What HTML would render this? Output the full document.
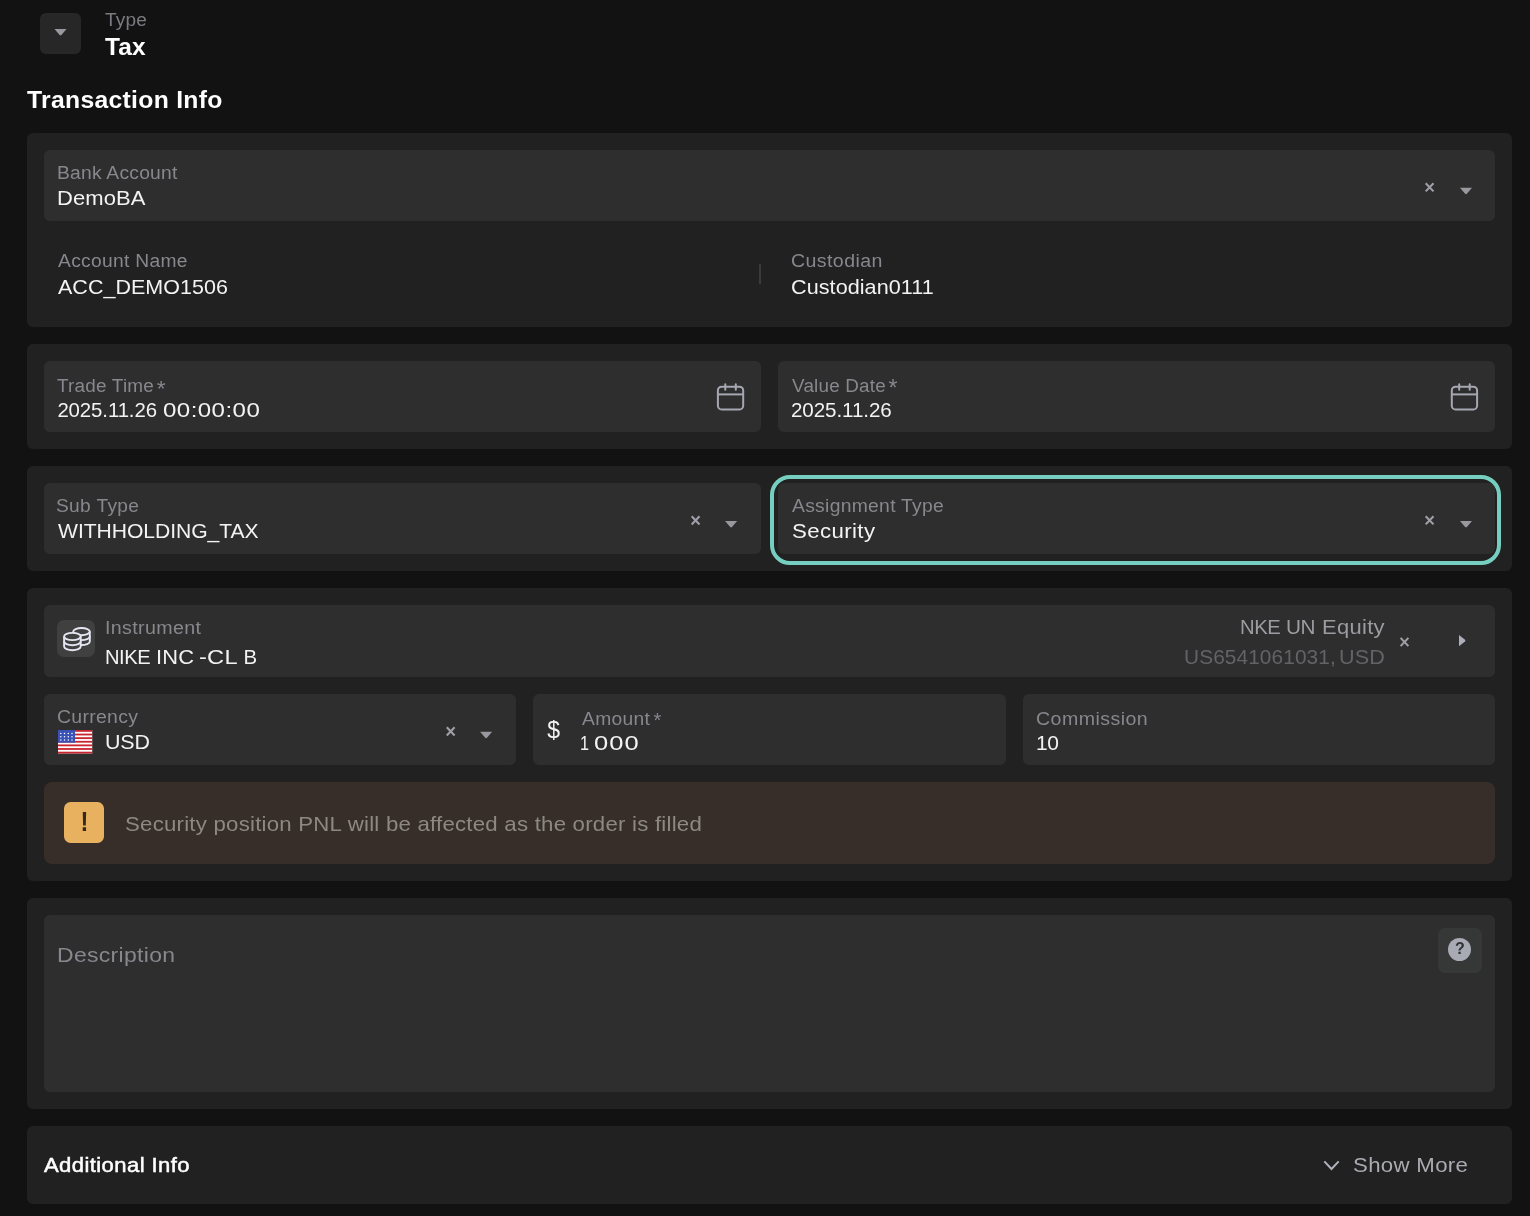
<!DOCTYPE html>
<html lang="en">
<head>
<meta charset="utf-8">
<title>Transaction Info</title>
<style>
html,body{margin:0;padding:0;}
body{width:1530px;height:1216px;background:#121212;overflow:hidden;position:relative;font-family:"Liberation Sans",sans-serif;-webkit-font-smoothing:antialiased;}
.b{position:absolute;}
.t{position:absolute;white-space:nowrap;line-height:1;margin:0;padding:0;transform-origin:0 0;}
svg{position:absolute;left:0;top:0;}
#txt{position:absolute;left:0;top:0;width:1530px;height:1216px;will-change:transform;}
</style>
</head>
<body>

<div class="b" style="left:40px;top:13px;width:41px;height:41px;background:#272727;border-radius:6px;"></div>
<div class="b" style="left:27px;top:133px;width:1485px;height:194px;background:#212121;border-radius:6px;"></div>
<div class="b" style="left:27px;top:344px;width:1485px;height:105px;background:#212121;border-radius:6px;"></div>
<div class="b" style="left:27px;top:466px;width:1485px;height:105px;background:#212121;border-radius:6px;"></div>
<div class="b" style="left:27px;top:588px;width:1485px;height:293px;background:#212121;border-radius:6px;"></div>
<div class="b" style="left:27px;top:898px;width:1485px;height:211px;background:#212121;border-radius:6px;"></div>
<div class="b" style="left:27px;top:1126px;width:1485px;height:78px;background:#212121;border-radius:6px;"></div>
<div class="b" style="left:44px;top:150px;width:1451px;height:71px;background:#2e2e2e;border-radius:6px;"></div>
<div class="b" style="left:759.4px;top:264.3px;width:1.3px;height:19.3px;background:#3b3b3b;border-radius:0px;"></div>
<div class="b" style="left:44px;top:361px;width:717px;height:71px;background:#2e2e2e;border-radius:6px;"></div>
<div class="b" style="left:778px;top:361px;width:717px;height:71px;background:#2e2e2e;border-radius:6px;"></div>
<div class="b" style="left:44px;top:483px;width:717px;height:71px;background:#2e2e2e;border-radius:6px;"></div>
<div class="b" style="left:778px;top:483px;width:717px;height:71px;background:#2e2e2e;border-radius:6px;"></div>
<div class="b" style="left:770px;top:475px;width:723px;height:82px;border:4px solid #75cebf;border-radius:20px;"></div>
<div class="b" style="left:44px;top:605px;width:1451px;height:72px;background:#2e2e2e;border-radius:6px;"></div>
<div class="b" style="left:57px;top:620px;width:38px;height:37px;background:#404040;border-radius:7px;"></div>
<div class="b" style="left:44px;top:694px;width:472px;height:71px;background:#2e2e2e;border-radius:6px;"></div>
<div class="b" style="left:533px;top:694px;width:473px;height:71px;background:#2e2e2e;border-radius:6px;"></div>
<div class="b" style="left:1023px;top:694px;width:472px;height:71px;background:#2e2e2e;border-radius:6px;"></div>
<div class="b" style="left:44px;top:782px;width:1451px;height:82px;background:#372e29;border-radius:8px;"></div>
<div class="b" style="left:64px;top:802px;width:40px;height:41px;background:#e7b160;border-radius:6.5px;"></div>
<div class="b" style="left:44px;top:915px;width:1451px;height:177px;background:#2e2e2e;border-radius:6px;"></div>
<div class="b" style="left:1438px;top:928px;width:44px;height:45px;background:#363838;border-radius:7px;"></div>
<div class="b" style="left:1448px;top:938px;width:23.2px;height:23.2px;background:#a8abb4;border-radius:12px;"></div>
<div id="txt">
<span class="t" id="type" style="left:104.87px;top:11.00px;font-size:18px;font-weight:400;color:#7a7a81;letter-spacing:0.190px;transform:scaleX(1.0582);">Type</span>
<span class="t" id="tax" style="left:105.20px;top:36.00px;font-size:23.5px;font-weight:700;color:#ffffff;letter-spacing:0.102px;transform:scaleX(1.0407);">Tax</span>
<span class="t" id="tinfo" style="left:27.10px;top:89.00px;font-size:23.5px;font-weight:700;color:#ffffff;letter-spacing:0.285px;transform:scaleX(1.0518);">Transaction Info</span>
<span class="t" id="bal" style="left:56.90px;top:164.00px;font-size:18px;font-weight:400;color:#87878d;letter-spacing:0.212px;transform:scaleX(1.0706);">Bank Account</span>
<span class="t" id="bav" style="left:57.16px;top:188.00px;font-size:20.4px;font-weight:400;color:#f3f3f3;letter-spacing:0.065px;transform:scaleX(1.0791);">DemoBA</span>
<span class="t" id="anl" style="left:57.76px;top:252.00px;font-size:18px;font-weight:400;color:#87878d;letter-spacing:0.283px;transform:scaleX(1.0686);">Account Name</span>
<span class="t" id="anv" style="left:57.87px;top:277.00px;font-size:20.4px;font-weight:400;color:#f3f3f3;letter-spacing:0.031px;transform:scaleX(1.0533);">ACC_DEMO1506</span>
<span class="t" id="cul" style="left:791.08px;top:252.00px;font-size:18px;font-weight:400;color:#87878d;letter-spacing:0.371px;transform:scaleX(1.0871);">Custodian</span>
<span class="t" id="cuv" style="left:790.65px;top:277.00px;font-size:20.4px;font-weight:400;color:#f3f3f3;letter-spacing:0.054px;transform:scaleX(1.0590);">Custodian0111</span>
<span class="t" id="ttl" style="left:56.96px;top:377.00px;font-size:18px;font-weight:400;color:#87878d;letter-spacing:0.184px;transform:scaleX(1.0524);">Trade Time</span>
<span class="t" id="ast1" style="left:156.63px;top:377.59px;font-size:22.55px;color:#87878d;">*</span>
<span class="t" id="ttv" style="left:57.38px;top:400.00px;font-size:20.4px;font-weight:400;color:#f3f3f3;letter-spacing:-0.099px;">2025.11.26</span>
<span class="t" id="ttv2" style="left:163.24px;top:400.00px;font-size:20.4px;font-weight:400;color:#f3f3f3;letter-spacing:0.375px;transform:scaleX(1.1800);">00:00:00</span>
<span class="t" id="vdl" style="left:792.04px;top:377.00px;font-size:18px;font-weight:400;color:#87878d;letter-spacing:0.199px;transform:scaleX(1.0471);">Value Date</span>
<span class="t" id="ast2" style="left:888.43px;top:377.38px;font-size:23.03px;color:#87878d;">*</span>
<span class="t" id="vdv" style="left:790.98px;top:400.00px;font-size:20.4px;font-weight:400;color:#f3f3f3;letter-spacing:-0.105px;transform:scaleX(1.0112);">2025.11.26</span>
<span class="t" id="stl" style="left:56.34px;top:497.00px;font-size:18px;font-weight:400;color:#87878d;letter-spacing:0.329px;transform:scaleX(1.0636);">Sub Type</span>
<span class="t" id="stv" style="left:57.91px;top:521.00px;font-size:20.4px;font-weight:400;color:#f3f3f3;letter-spacing:-0.058px;transform:scaleX(1.0364);">WITHHOLDING_TAX</span>
<span class="t" id="atl" style="left:792.25px;top:497.00px;font-size:18px;font-weight:400;color:#87878d;letter-spacing:0.267px;transform:scaleX(1.0731);">Assignment Type</span>
<span class="t" id="atv" style="left:791.70px;top:521.00px;font-size:20.4px;font-weight:400;color:#f3f3f3;letter-spacing:0.361px;transform:scaleX(1.0900);">Security</span>
<span class="t" id="inl" style="left:104.52px;top:619.00px;font-size:18px;font-weight:400;color:#87878d;letter-spacing:0.331px;transform:scaleX(1.0900);">Instrument</span>
<span class="t" id="inv" style="left:105.03px;top:647.00px;font-size:20.4px;font-weight:400;color:#f3f3f3;letter-spacing:-0.435px;transform:scaleX(0.9872);">NIKE </span>
<span class="t" id="inv2" style="left:156.48px;top:647.00px;font-size:20.4px;font-weight:400;color:#f3f3f3;letter-spacing:0.140px;transform:scaleX(1.0722);">INC </span>
<span class="t" id="inv3" style="left:199.40px;top:647.00px;font-size:20.4px;font-weight:400;color:#f3f3f3;letter-spacing:0.194px;transform:scaleX(1.1600);">-CL </span>
<span class="t" id="inv4" style="left:243.52px;top:647.00px;font-size:20.4px;font-weight:400;color:#f3f3f3;letter-spacing:0.000px;">B</span>
<span class="t" id="nke" style="left:1239.60px;top:617.00px;font-size:20.4px;font-weight:400;color:#9c9ca1;letter-spacing:-0.431px;transform:scaleX(0.9933);">NKE </span>
<span class="t" id="nke2" style="left:1286.22px;top:617.00px;font-size:20.4px;font-weight:400;color:#9c9ca1;letter-spacing:-0.490px;transform:scaleX(1.0180);">UN </span>
<span class="t" id="nke3" style="left:1321.91px;top:617.00px;font-size:20.4px;font-weight:400;color:#9c9ca1;letter-spacing:0.290px;transform:scaleX(1.0758);">Equity</span>
<span class="t" id="isin" style="left:1183.74px;top:647.00px;font-size:20.4px;font-weight:400;color:#636367;letter-spacing:0.107px;transform:scaleX(1.0206);">US6541061031, </span>
<span class="t" id="isin2" style="left:1339.36px;top:647.00px;font-size:20.4px;font-weight:400;color:#636367;letter-spacing:0.084px;transform:scaleX(1.0598);">USD</span>
<span class="t" id="crl" style="left:56.82px;top:708.00px;font-size:18px;font-weight:400;color:#87878d;letter-spacing:0.262px;transform:scaleX(1.0803);">Currency</span>
<span class="t" id="crv" style="left:104.59px;top:732.00px;font-size:20.4px;font-weight:400;color:#f3f3f3;letter-spacing:-0.171px;transform:scaleX(1.0509);">USD</span>
<span class="t" id="dol" style="left:547.26px;top:719.00px;font-size:23px;font-weight:400;color:#f3f3f3;letter-spacing:0.000px;">$</span>
<span class="t" id="aml" style="left:581.80px;top:710.00px;font-size:18px;font-weight:400;color:#87878d;letter-spacing:0.293px;transform:scaleX(1.0698);">Amount</span>
<span class="t" id="ast3" style="left:653.51px;top:710.05px;font-size:20.01px;color:#87878d;">*</span>
<span class="t" id="amv" style="left:579.58px;top:733.00px;font-size:20.4px;font-weight:400;color:#f3f3f3;letter-spacing:0.000px;transform:scaleX(0.8000);">1 </span>
<span class="t" id="amv2" style="left:594.02px;top:733.00px;font-size:20.4px;font-weight:400;color:#f3f3f3;letter-spacing:0.824px;transform:scaleX(1.2500);">000</span>
<span class="t" id="col" style="left:1035.68px;top:710.00px;font-size:18px;font-weight:400;color:#87878d;letter-spacing:0.408px;transform:scaleX(1.0872);">Commission</span>
<span class="t" id="cov" style="left:1035.53px;top:733.00px;font-size:20.4px;font-weight:400;color:#f3f3f3;letter-spacing:-0.455px;transform:scaleX(1.0277);">10</span>
<span class="t" id="bang" style="left:79.4px;top:809px;width:11px;text-align:center;font-size:27px;font-weight:700;color:#33291f;transform:scaleX(0.88);transform-origin:50% 50%;">!</span>
<span class="t" id="warn" style="left:124.66px;top:814.00px;font-size:20.4px;font-weight:400;color:#8d8883;letter-spacing:0.205px;transform:scaleX(1.0900);">Security position PNL will be affected as the order is filled</span>
<span class="t" id="desc" style="left:56.99px;top:945.00px;font-size:20.4px;font-weight:400;color:#87878d;letter-spacing:0.300px;transform:scaleX(1.1248);">Description</span>
<span class="t" id="q" style="left:1449px;top:941px;width:22px;text-align:center;font-size:16px;font-weight:700;color:#303135;">?</span>
<span class="t" id="addi" style="left:44.20px;top:1155.00px;font-size:20.4px;font-weight:400;color:#ffffff;letter-spacing:0.378px;transform:scaleX(1.0816);-webkit-text-stroke:0.5px #ffffff;">Additional Info</span>
<span class="t" id="more" style="left:1352.59px;top:1155.00px;font-size:20.4px;font-weight:400;color:#aaaab3;letter-spacing:0.289px;transform:scaleX(1.0900);">Show More</span>
</div>
<svg width="1530" height="1216" viewBox="0 0 1530 1216">
<path d="M54.5 29 H66.5 L61.4 35 Q60.5 35.9 59.6 35 Z" fill="#98989f"/>
<path d="M1425.6999999999998 183.20000000000002 L1433.5 191.4 M1433.5 183.20000000000002 L1425.6999999999998 191.4" stroke="#9f9fa7" stroke-width="2.1" fill="none"/>
<path d="M1460 187.8 H1472 L1466.9 193.8 Q1466 194.70000000000002 1465.1 193.8 Z" fill="#98989f"/>
<path d="M691.7 516.3 L699.5 524.5 M699.5 516.3 L691.7 524.5" stroke="#9f9fa7" stroke-width="2.1" fill="none"/>
<path d="M725.1 521 H737.1 L732.0 527 Q731.1 527.9 730.2 527 Z" fill="#98989f"/>
<path d="M1425.6999999999998 516.1999999999999 L1433.5 524.4 M1433.5 516.1999999999999 L1425.6999999999998 524.4" stroke="#9f9fa7" stroke-width="2.1" fill="none"/>
<path d="M1460 520.9 H1472 L1466.9 526.9 Q1466 527.8 1465.1 526.9 Z" fill="#98989f"/>
<path d="M446.8 727.3 L454.59999999999997 735.5 M454.59999999999997 727.3 L446.8 735.5" stroke="#9f9fa7" stroke-width="2.1" fill="none"/>
<path d="M480.1 731.7 H492.1 L487.0 737.7 Q486.1 738.6 485.20000000000005 737.7 Z" fill="#98989f"/>
<path d="M1400.6 637.9 L1408.4 646.1 M1408.4 637.9 L1400.6 646.1" stroke="#9f9fa7" stroke-width="2.1" fill="none"/>
<path d="M1459 635 V646.2 L1465 641.4 Q1465.8 640.6 1465 639.8 Z" fill="#adafbd"/>
<g fill="none" stroke="#a5a7b1" stroke-width="2" stroke-linecap="round"><rect x="717.9" y="386.7" width="25.3" height="22.8" rx="3.8"/><path d="M717.9 394.4 H743.1999999999999" stroke-linecap="butt"/><path d="M725.3 384.3 V389.8 M735.8 384.3 V389.8"/></g>
<g fill="none" stroke="#a5a7b1" stroke-width="2" stroke-linecap="round"><rect x="1451.8" y="386.7" width="25.3" height="22.8" rx="3.8"/><path d="M1451.8 394.4 H1477.1" stroke-linecap="butt"/><path d="M1459.2 384.3 V389.8 M1469.7 384.3 V389.8"/></g>
<g fill="none" stroke="#e6e6f3" stroke-width="1.9"><ellipse cx="81.5" cy="631.6" rx="8.3" ry="3.6"/><path d="M89.8 631.6 V641.4 A8.3 3.6 0 0 1 80.9 645"/><path d="M89.8 636.5 A8.3 3.6 0 0 1 80.9 640.1"/><ellipse cx="72.4" cy="636.5" rx="8.3" ry="3.6" fill="#404040"/><path d="M64.1 636.5 V646.6 A8.3 3.6 0 0 0 80.7 646.6 V636.5"/><path d="M64.1 641.6 A8.3 3.6 0 0 0 80.7 641.6"/></g>
<rect x="58" y="730" width="34.2" height="23.5" fill="#ffffff"/>
<rect x="58" y="730.000" width="34.2" height="1.808" fill="#c9242f"/>
<rect x="58" y="733.615" width="34.2" height="1.808" fill="#c9242f"/>
<rect x="58" y="737.231" width="34.2" height="1.808" fill="#c9242f"/>
<rect x="58" y="740.846" width="34.2" height="1.808" fill="#c9242f"/>
<rect x="58" y="744.462" width="34.2" height="1.808" fill="#c9242f"/>
<rect x="58" y="748.077" width="34.2" height="1.808" fill="#c9242f"/>
<rect x="58" y="751.692" width="34.2" height="1.808" fill="#c9242f"/>
<rect x="58" y="730" width="17" height="12.654" fill="#3a51b5"/>
<circle cx="60.8" cy="733.4" r="0.75" fill="#ffffff"/>
<circle cx="60.8" cy="736.7" r="0.75" fill="#ffffff"/>
<circle cx="60.8" cy="740.1" r="0.75" fill="#ffffff"/>
<circle cx="64.5" cy="733.4" r="0.75" fill="#ffffff"/>
<circle cx="64.5" cy="736.7" r="0.75" fill="#ffffff"/>
<circle cx="64.5" cy="740.1" r="0.75" fill="#ffffff"/>
<circle cx="68.3" cy="733.4" r="0.75" fill="#ffffff"/>
<circle cx="68.3" cy="736.7" r="0.75" fill="#ffffff"/>
<circle cx="68.3" cy="740.1" r="0.75" fill="#ffffff"/>
<circle cx="72.0" cy="733.4" r="0.75" fill="#ffffff"/>
<circle cx="72.0" cy="736.7" r="0.75" fill="#ffffff"/>
<circle cx="72.0" cy="740.1" r="0.75" fill="#ffffff"/>
<path d="M1324.3 1161.4 L1331.5 1169 L1338.7 1161.4" fill="none" stroke="#b0b2bc" stroke-width="2"/>
</svg>

</body>
</html>
